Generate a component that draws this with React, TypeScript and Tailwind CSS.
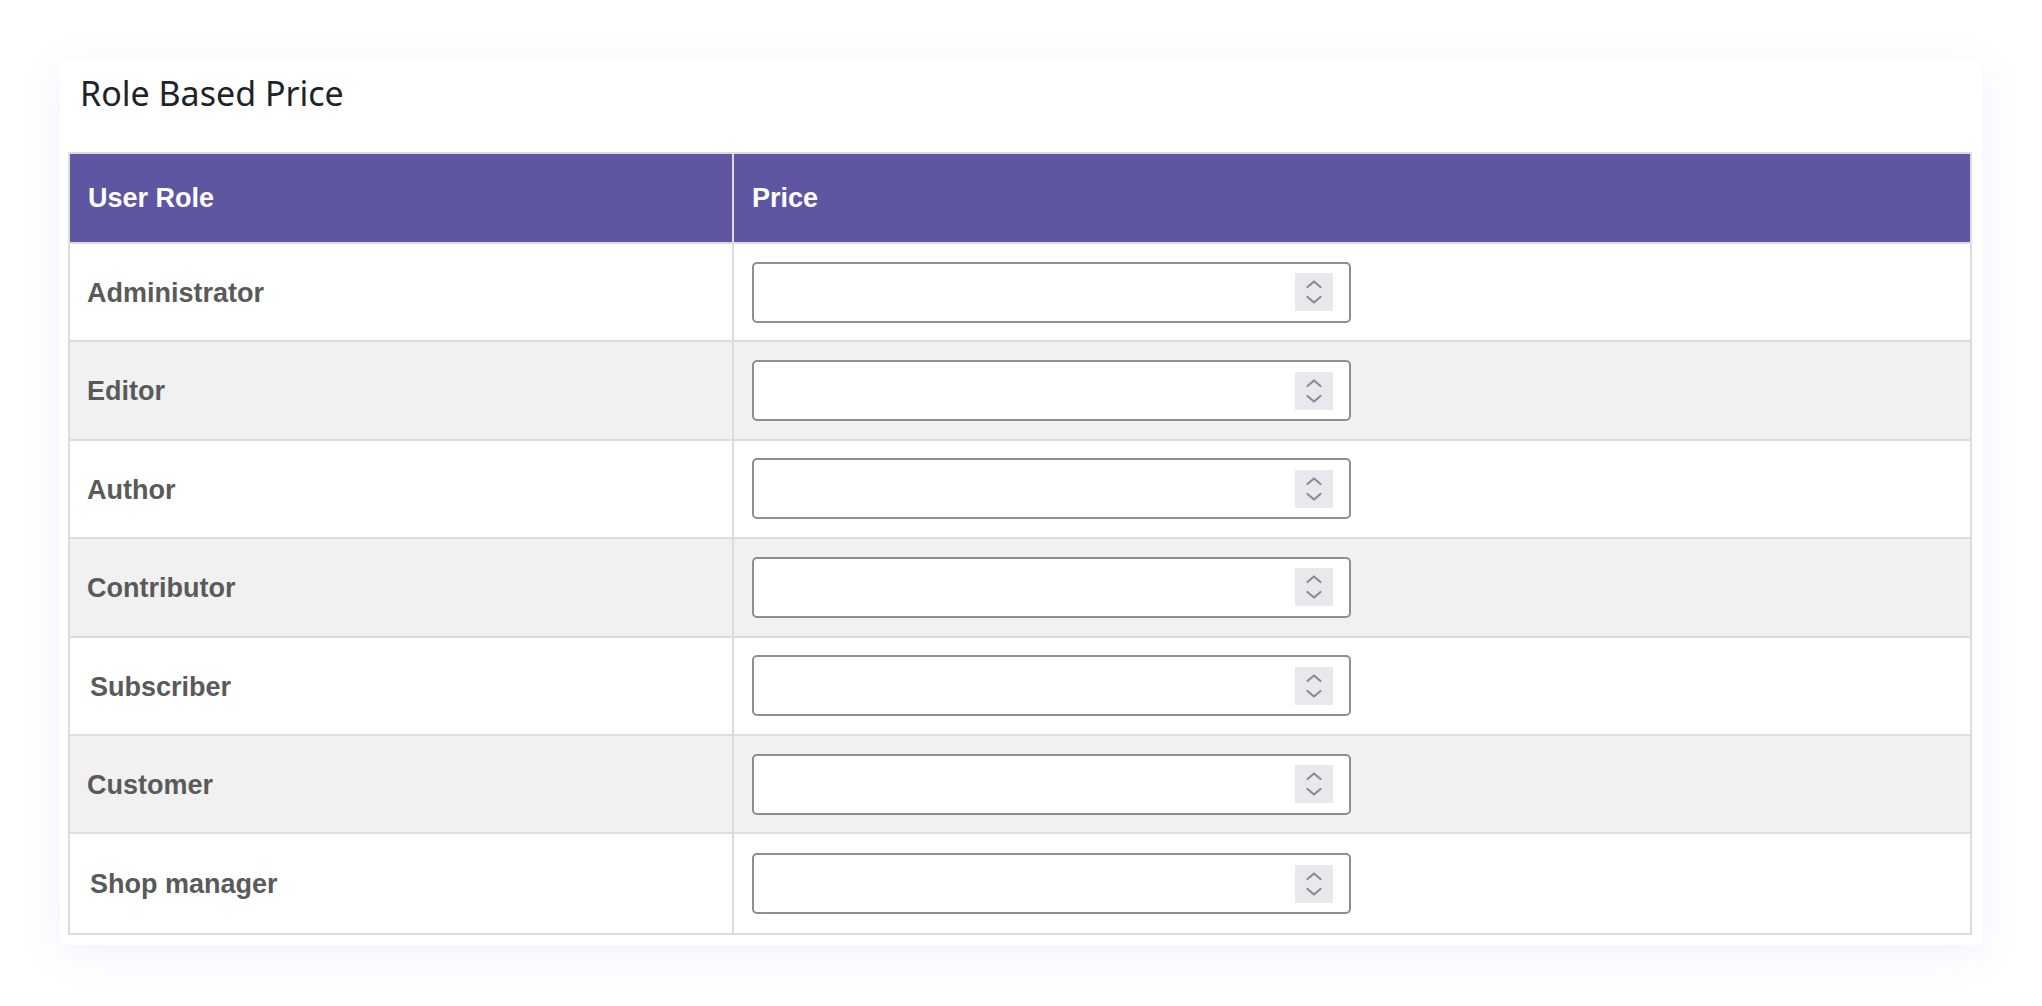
import React from "react";

const roles = [
  { name: "Administrator", indent: false },
  { name: "Editor", indent: false },
  { name: "Author", indent: false },
  { name: "Contributor", indent: false },
  { name: "Subscriber", indent: true },
  { name: "Customer", indent: false },
  { name: "Shop manager", indent: true },
];

function Spinner() {
  return (
    <div className="h-[38px] w-[38px] bg-[#e9e9ed]">
      <svg width="38" height="38" viewBox="0 0 38 38" fill="none">
        <path d="M12.5 14 L19 8.5 L25.5 14" stroke="#8a8a98" strokeWidth="2.2" strokeLinecap="round" strokeLinejoin="round" />
        <path d="M12.5 24 L19 29.5 L25.5 24" stroke="#8a8a98" strokeWidth="2.2" strokeLinecap="round" strokeLinejoin="round" />
      </svg>
    </div>
  );
}

function PriceInput() {
  return (
    <div className="flex h-[61px] w-[599px] items-center justify-end rounded-[5px] border-2 border-[#8c8f94] bg-white pr-[16px]">
      <Spinner />
    </div>
  );
}

export default function App() {
  return (
    <div className="min-h-screen bg-white p-[60px] font-['Liberation_Sans',Arial,sans-serif]">
      <div className="h-[885px] w-[1922px] bg-white pl-[8px] shadow-[0_8px_40px_rgba(110,90,220,0.09)]">
        {/* Title */}
        <div className="h-[92px] pl-[12px] pt-[16px]">
          <h2 className="font-['Noto_Sans',sans-serif] text-[34px] font-normal leading-none text-[#1d2327]">
            Role Based Price
          </h2>
        </div>

        {/* Table */}
        <div className="w-[1904px] border-2 border-[#dcdcde]">
          <div className="flex h-[90px] border-b-2 border-[#dcdcde] bg-[#5e56a3] text-[27px] font-bold text-white">
            <div className="flex w-[664px] items-center border-r-2 border-[#dcdcde] pl-[18px]">User Role</div>
            <div className="flex flex-1 items-center pl-[18px]">Price</div>
          </div>

          {roles.map((role, i) => (
            <div
              key={role.name}
              className={`flex h-[98.4px] ${i < roles.length - 1 ? "border-b-2" : ""} border-[#dcdcde] ${
                i % 2 === 1 ? "bg-[#f1f1f1]" : "bg-white"
              }`}
            >
              <div
                className={`flex w-[664px] items-center border-r-2 border-[#dcdcde] pt-[2px] text-[27px] font-bold text-[#5a5a5a] ${
                  role.indent ? "pl-[20px]" : "pl-[17px]"
                }`}
              >
                {role.name}
              </div>
              <div className="flex flex-1 items-center pl-[18px]">
                <PriceInput />
              </div>
            </div>
          ))}
        </div>
      </div>
    </div>
  );
}
